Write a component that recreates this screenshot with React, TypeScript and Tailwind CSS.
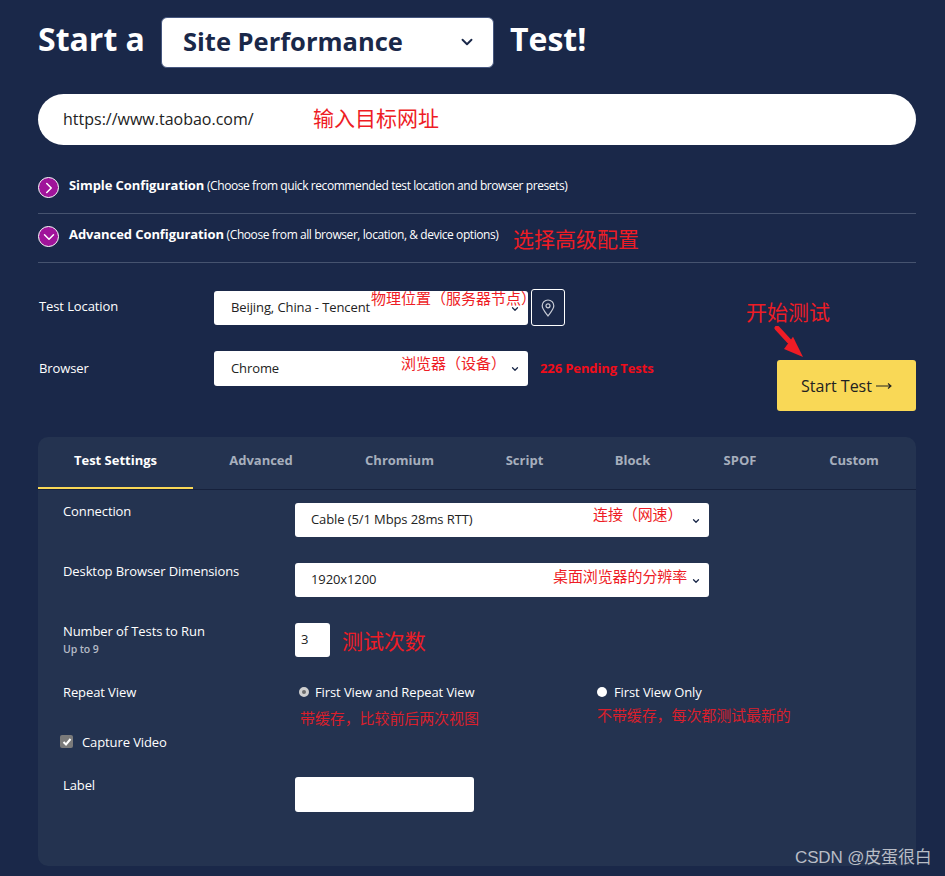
import { ChevronDown, ChevronRight } from "lucide-react";

const font = "font-['Noto_Sans_CJK_SC',sans-serif]";

const tabs = [
  { label: "Test Settings", cls: "w-[155px] text-white border-b-2 border-[#f9d856]" },
  { label: "Advanced", cls: "w-[136px]" },
  { label: "Chromium", cls: "w-[141px]" },
  { label: "Script", cls: "w-[109px]" },
  { label: "Block", cls: "w-[107px]" },
  { label: "SPOF", cls: "w-[108px]" },
  { label: "Custom", cls: "w-[120px]" },
];

function Select({ value, className }: { value: string; className: string }) {
  return (
    <div className={`relative rounded-[3px] bg-white text-[13px] tracking-[-0.1px] text-[#222] ${className}`}>
      <div className="flex h-full items-center">{value}</div>
      <ChevronDown className="absolute right-[8px] top-[13px] h-[10px] w-[10px] text-[#1a2849]" strokeWidth={3} />
    </div>
  );
}

function Note({ text, className, color = "text-[#ee1c25]" }: { text: string; className: string; color?: string }) {
  return <span className={`absolute whitespace-nowrap ${font} ${color} ${className}`}>{text}</span>;
}

export default function App() {
  return (
    <div className="relative h-[876px] w-[945px] overflow-hidden bg-[#1a2849] pl-[38px] pr-[29px] pt-[17px] font-['Open_Sans',sans-serif] text-white">
      <div className="flex h-[51px] items-center">
        <h1 className="mb-[7px] w-[123px] text-[32px] font-bold leading-none">Start a</h1>
        <div className="flex h-[51px] w-[333px] items-center justify-between rounded-[6px] border border-[#46577f] bg-white pb-[2px] pl-[21px] pr-[17px] text-[25.5px] font-bold text-[#1a2849]">
          Site Performance
          <ChevronDown className="h-[18px] w-[18px]" strokeWidth={2.5} />
        </div>
        <span className="mb-[7px] ml-[16px] text-[32px] font-bold leading-none">Test!</span>
      </div>

      <div className="relative mt-[26px] flex h-[51px] items-center rounded-full bg-white pb-[2px] pl-[25px] text-[16px] text-[#222]">
        https://www.taobao.com/
        <Note text="输入目标网址" className="left-[275px] top-[8px] text-[21px]" />
      </div>

      <div className="mt-[32px] flex h-[37px] items-start border-b border-[#46536f]">
        <span className="flex h-[21px] w-[21px] items-center justify-center rounded-full border border-white bg-[#a0149a]">
          <ChevronRight className="h-[18px] w-[18px]" strokeWidth={2} />
        </span>
        <p className="ml-[10px] text-[12px] leading-[16px] tracking-[-0.42px]">
          <strong className="text-[13px] font-bold tracking-[-0.08px]">Simple Configuration</strong> (Choose from quick recommended test location and browser presets)
        </p>
      </div>

      <div className="relative mt-[12px] flex h-[37px] items-start border-b border-[#46536f]">
        <span className="flex h-[21px] w-[21px] items-center justify-center rounded-full border border-white bg-[#a0149a]">
          <ChevronDown className="h-[18px] w-[18px]" strokeWidth={2} />
        </span>
        <p className="ml-[10px] text-[12px] leading-[16px] tracking-[-0.42px]">
          <strong className="text-[13px] font-bold tracking-[-0.08px]">Advanced Configuration</strong> (Choose from all browser, location, &amp; device options)
        </p>
        <Note text="选择高级配置" className="left-[475px] top-[-3px] text-[21px]" />
      </div>

      <div className="relative mt-[26px] flex items-center text-[13px]">
        <span className="mb-[2px] ml-[1px] w-[175px] tracking-[-0.1px]">Test Location</span>
        <Select value="Beijing, China - Tencent" className="h-[34px] w-[314px] pl-[17px]" />
        <button className="ml-[3px] flex h-[37px] w-[34px] items-center justify-center rounded-[3px] border border-white">
          <svg width="14" height="18" viewBox="0 0 14 18" fill="none" stroke="#c8ccd6" strokeWidth="1.2">
            <path d="M7 17 C4 13 1.2 10 1.2 6.8 A5.8 5.8 0 0 1 12.8 6.8 C12.8 10 10 13 7 17 Z" />
            <circle cx="7" cy="6.8" r="2" />
          </svg>
        </button>
        <Note text="物理位置（服务器节点）" className="left-[333px] top-[-2px] text-[15px]" />
      </div>

      <div className="relative mt-[25px] flex h-[60px] items-start text-[13px]">
        <span className="ml-[1px] mt-[8px] w-[175px] tracking-[-0.1px]">Browser</span>
        <Select value="Chrome" className="h-[35px] w-[314px] pl-[17px]" />
        <span className="ml-[12px] mt-[8px] text-[13px] font-bold tracking-[-0.1px] text-[#f00d1a]">226 Pending Tests</span>
        <button className="ml-auto mt-[9px] flex h-[51px] w-[139px] items-center justify-center gap-[4px] rounded-[3px] bg-[#f9d856] text-[16px] text-[#222]">
          Start Test
          <svg width="16" height="8" viewBox="0 0 16 8" fill="none" stroke="#222" strokeWidth="1.1">
            <path d="M0 4 H15 M12 1.5 L15 4 L12 6.5" />
          </svg>
        </button>
        <Note text="浏览器（设备）" className="left-[363px] top-[1px] text-[15px]" />
        <Note text="开始测试" className="left-[708px] top-[-55px] text-[21px]" />
        <svg className="absolute left-[736px] top-[-25px]" width="32" height="32" viewBox="0 0 32 32">
          <path d="M3 2 L15 15" stroke="#ee1c25" strokeWidth="5" strokeLinecap="round" />
          <path d="M19 10.7 L29 31 L10 23 Z" fill="#ee1c25" />
        </svg>
      </div>

      <section className="mt-[26px] h-[429px] rounded-[10px] bg-[#243350]">
        <div className="flex h-[53px] border-b border-[#16213c] text-center text-[13px] font-bold text-[#a7afbd]">
          {tabs.map((tab) => (
            <div key={tab.label} className={`h-[52px] pt-[14px] leading-[18px] ${tab.cls}`}>
              {tab.label}
            </div>
          ))}
        </div>

        <div className="pl-[25px] pt-[13px] text-[13px] tracking-[-0.1px]">
          <div className="relative flex h-[60px] items-start">
            <span className="w-[232px] leading-[16px]">Connection</span>
            <Select value="Cable (5/1 Mbps 28ms RTT)" className="h-[34px] w-[414px] pl-[16px]" />
            <Note text="连接（网速）" className="left-[530px] top-[0px] text-[15px]" />
          </div>
          <div className="relative flex h-[60px] items-start">
            <span className="w-[232px] leading-[16px]">Desktop Browser Dimensions</span>
            <Select value="1920x1200" className="h-[34px] w-[414px] pl-[16px]" />
            <Note text="桌面浏览器的分辨率" className="left-[490px] top-[2px] text-[15px]" />
          </div>
          <div className="relative flex h-[60px] items-start">
            <div className="w-[232px] leading-[16px]">
              Number of Tests to Run
              <div className="mt-[2px] text-[10.5px] font-semibold text-[#b4bac6]">Up to 9</div>
            </div>
            <div className="flex h-[34px] w-[35px] items-center rounded-[3px] bg-white pl-[6px] text-[#222]">3</div>
            <span className={`ml-[12px] text-[21px] leading-[34px] text-[#ee1c25] ${font}`}>测试次数</span>
          </div>

          <div className="relative flex h-[50px] items-start">
            <span className="w-[232px] leading-[18px]">Repeat View</span>
            <label className="flex w-[302px] items-center leading-[18px]">
              <span className="ml-[4px] mr-[6px] h-[10px] w-[10px] rounded-full border-[3px] border-[#cfcfcf] bg-[#6b6b6b]" />
              First View and Repeat View
            </label>
            <label className="flex items-center leading-[18px]">
              <span className="mb-[1px] mr-[7px] h-[10px] w-[10px] rounded-full bg-white" />
              First View Only
            </label>
            <Note text="带缓存，比较前后两次视图" className="left-[237px] top-[24px] text-[15px]" color="text-[#d91f2c]" />
            <Note text="不带缓存，每次都测试最新的" className="left-[534px] top-[21px] text-[15px]" color="text-[#d91f2c]" />
          </div>

          <label className="flex h-[44px] items-start leading-[18px]">
            <span className="-ml-[3px] mr-[9px] mt-[2px] flex h-[13px] w-[13px] items-center justify-center rounded-[2px] bg-[#7a7a7a]">
              <svg width="10" height="10" viewBox="0 0 10 10" fill="none" stroke="white" strokeWidth="2">
                <path d="M1.5 5 L4 7.5 L8.5 2" />
              </svg>
            </span>
            Capture Video
          </label>

          <div className="flex items-start">
            <span className="w-[232px] leading-[16px]">Label</span>
            <div className="h-[35px] w-[179px] rounded-[3px] bg-white" />
          </div>
        </div>
      </section>

      <span className="absolute left-[795px] top-[845px] whitespace-nowrap font-['Liberation_Sans','Noto_Sans_CJK_SC',sans-serif] text-[17px] tracking-[-0.15px] text-[#b9bdc6]">
        CSDN @皮蛋很白
      </span>
    </div>
  );
}
